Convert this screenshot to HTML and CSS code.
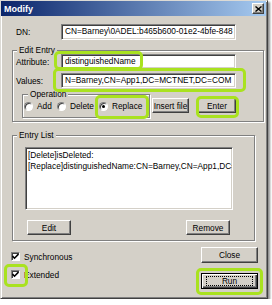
FILE: index.html
```html
<!DOCTYPE html>
<html>
<head>
<meta charset="utf-8">
<link rel="stylesheet" href="styles.css">
</head>
<body>
<div class="window">
  <div class="titlebar">
    <span class="title">Modify</span>
    <span class="xbtn"><svg width="7" height="6" viewBox="0 0 7 6"><path d="M0.5 0.5 L6.5 5.5 M6.5 0.5 L0.5 5.5" stroke="#000" stroke-width="1.4" fill="none"/></svg></span>
  </div>
  <div class="content">
    <div class="row dn"><span class="lbl">DN:</span><div class="input">CN=Barney\0ADEL:b465b600-01e2-4bfe-848</div></div>
    <fieldset class="group editgrp">
      <legend>Edit Entry</legend>
      <div class="row attr"><span class="lbl">Attribute:</span><div class="input">distinguishedName</div></div>
      <div class="row vals"><span class="lbl">Values:</span><div class="input">N=Barney,CN=App1,DC=MCTNET,DC=COM</div></div>
      <div class="oprow">
        <fieldset class="group op">
          <legend>Operation</legend>
          <div class="radios">
            <span class="radio r-add"><span class="circle"></span>Add</span>
            <span class="radio r-del"><span class="circle"></span>Delete</span>
            <span class="radio r-rep"><span class="circle on"></span>Replace</span>
          </div>
        </fieldset>
        <div class="btn insert">Insert file</div>
        <div class="btn enter">Enter</div>
      </div>
    </fieldset>
    <fieldset class="group listgrp">
      <legend>Entry List</legend>
      <div class="listbox">
        <div class="item">[Delete]isDeleted:</div>
        <div class="item">[Replace]distinguishedName:CN=Barney,CN=App1,DC=MCTNET,DC=COM</div>
      </div>
      <div class="listbtns">
        <div class="btn editbtn">Edit</div>
        <div class="btn removebtn">Remove</div>
      </div>
    </fieldset>
    <div class="bottom">
      <div class="checks">
        <div class="check"><span class="box"><svg width="7" height="7" viewBox="0 0 7 7"><path d="M0.5 3 L2.5 5.2 L6.5 1" stroke="#000" stroke-width="1.6" fill="none"/></svg></span>Synchronous</div>
        <div class="check"><span class="box"><svg width="7" height="7" viewBox="0 0 7 7"><path d="M0.5 3 L2.5 5.2 L6.5 1" stroke="#000" stroke-width="1.6" fill="none"/></svg></span>Extended</div>
      </div>
      <div class="mainbtns">
        <div class="btn closebtn">Close</div>
        <div class="btn runbtn"><span class="focus">Run</span></div>
      </div>
    </div>
  </div>
  <div class="hl hl-attr"></div>
  <div class="hl hl-vals"></div>
  <div class="hl hl-rep"></div>
  <div class="hl hl-enter"></div>
  <div class="hl hl-ext"></div>
  <div class="hl hl-run"></div>
</div>
</body>
</html>
```
FILE: styles.css
```css
html, body {
  margin: 0;
  padding: 0;
  background: #ffffff;
}
body {
  font-family: "Liberation Sans", Arial, sans-serif;
  font-size: 8.3px;
  color: #000;
}
.window {
  position: relative;
  box-sizing: border-box;
  width: 268px;
  height: 299px;
  background: #d4d0c8;
  border: 1px solid;
  border-color: #dcdad5 #404040 #404040 #dcdad5;
  box-shadow: inset 1px 1px #ffffff, inset -1px -1px #808080, 2px 2px 2px rgba(0,0,0,0.45);
}
.titlebar {
  height: 15px;
  margin-right: 1px;
  background: linear-gradient(to right, #0a246a, #a6caf0);
  display: flex;
  align-items: center;
  justify-content: space-between;
}
.title {
  color: #fff;
  font-weight: bold;
  font-size: 9px;
  padding-left: 3px;
}
.xbtn {
  box-sizing: border-box;
  width: 12px;
  height: 11px;
  margin-right: 2px;
  background: #d4d0c8;
  border: 1px solid;
  border-color: #fff #404040 #404040 #fff;
  box-shadow: inset -1px -1px #808080;
  display: flex;
  align-items: center;
  justify-content: center;
}
.content {
  padding-top: 8px;
}
.row {
  display: grid;
  grid-template-columns: 45px 175px;
  align-items: center;
}
.dn {
  padding-left: 15px;
}
.dn .input { height: 16px; }
.input {
  box-sizing: border-box;
  height: 15px;
  background: #fff;
  border: 1px solid;
  border-color: #808080 #fff #fff #808080;
  box-shadow: inset 1px 1px #404040, inset -1px -1px #d4d0c8;
  padding-left: 3px;
  white-space: nowrap;
  overflow: hidden;
  line-height: 13px;
}
.group {
  margin: 0;
  padding: 0;
  min-width: 0;
  box-sizing: border-box;
  border: 1px solid #808080;
  box-shadow: inset 1px 1px #fff, 1px 1px #fff;
}
.group legend {
  padding: 0 2px;
  margin-left: 4px;
  line-height: 8px;
  background: #d4d0c8;
}
.editgrp {
  margin: 6px 0 0 11px;
  width: 252px;
  padding-bottom: 3px;
}
.attr, .vals {
  padding-left: 3px;
}
.vals {
  margin-top: 4px;
}
.oprow {
  display: flex;
  align-items: flex-start;
  margin-top: 2px;
}
.op {
  margin-left: 9px;
  width: 128px;
  padding: 3px 0 6px 1px;
}
.radios {
  display: flex;
  height: 10px;
  align-items: center;
}
.radio {
  display: flex;
  align-items: center;
  white-space: nowrap;
}
.r-add { width: 33px; }
.r-del { width: 42px; }
.circle {
  box-sizing: border-box;
  width: 9px;
  height: 9px;
  border-radius: 50%;
  background: #fff;
  border: 1px solid;
  border-color: #808080 #fff #fff #808080;
  box-shadow: inset 1px 1px #404040;
  margin-right: 4px;
  display: flex;
  align-items: center;
  justify-content: center;
}
.circle.on::after {
  content: "";
  width: 3px;
  height: 3px;
  border-radius: 50%;
  background: #000;
}
.btn {
  box-sizing: border-box;
  height: 15px;
  background: #d4d0c8;
  border: 1px solid;
  border-color: #fff #404040 #404040 #fff;
  box-shadow: inset -1px -1px #808080;
  display: flex;
  align-items: center;
  justify-content: center;
  white-space: nowrap;
}
.insert {
  margin: 8px 0 0 2px;
  width: 37px;
}
.enter {
  margin: 8px 0 0 9px;
  width: 38px;
}
.listgrp {
  margin: 9px 0 0 11px;
  width: 243px;
  padding-bottom: 5px;
}
.listbox {
  box-sizing: border-box;
  margin: 8px 0 0 12px;
  width: 208px;
  height: 63px;
  background: #fff;
  border: 1px solid;
  border-color: #808080 #fff #fff #808080;
  box-shadow: inset 1px 1px #404040, inset -1px -1px #d4d0c8;
  padding: 2px 0 0 2px;
  overflow: hidden;
}
.item {
  line-height: 11px;
  white-space: nowrap;
}
.listbtns {
  display: flex;
  margin-top: 10px;
}
.editbtn {
  margin-left: 14px;
  width: 44px;
}
.removebtn {
  margin-left: 115px;
  width: 44px;
}
.bottom {
  display: flex;
  justify-content: space-between;
}
.checks {
  margin: 11px 0 0 10px;
  display: flex;
  flex-direction: column;
  gap: 9px;
}
.check {
  display: flex;
  align-items: center;
  height: 9px;
}
.box {
  box-sizing: border-box;
  width: 9px;
  height: 9px;
  background: #fff;
  border: 1px solid;
  border-color: #808080 #fff #fff #808080;
  box-shadow: inset 1px 1px #404040;
  margin-right: 4px;
  display: flex;
  align-items: center;
  justify-content: center;
}
.box svg { display: block; }
.mainbtns {
  margin: 6px 9px 0 0;
  display: flex;
  flex-direction: column;
  gap: 10px;
}
.mainbtns .btn {
  width: 57px;
  height: 16px;
}
.runbtn {
  border: 1px solid #000;
  box-shadow: inset 1px 1px #fff, inset -1px -1px #404040, inset -2px -2px #808080;
}
.focus {
  box-sizing: border-box;
  width: 47px;
  height: 10px;
  border: 1px dotted #000;
  display: flex;
  align-items: center;
  justify-content: center;
}
.hl {
  position: absolute;
  box-sizing: border-box;
  border: 3px solid #a9e21f;
  border-radius: 5px;
}
.hl-attr { left: 53px; top: 50px; width: 89px; height: 19px; }
.hl-vals { left: 52px; top: 67px; width: 193px; height: 24px; }
.hl-rep { left: 94px; top: 94px; width: 54px; height: 24px; }
.hl-enter { left: 195px; top: 95px; width: 43px; height: 22px; }
.hl-ext { left: 3px; top: 263px; width: 24px; height: 23px; }
.hl-run { left: 195px; top: 267px; width: 67px; height: 27px; }
```
